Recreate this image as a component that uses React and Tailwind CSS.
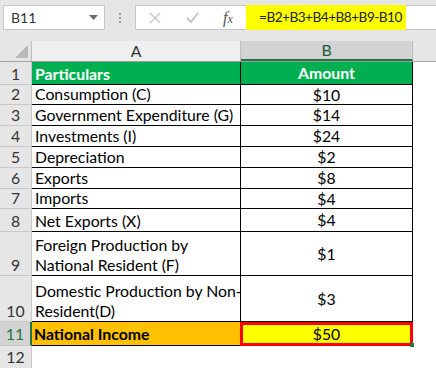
import React from 'react';

const rows = [
  { n: 1, h: 'h-[23px]', a: 'Particulars', b: 'Amount', head: true },
  { n: 2, h: 'h-[20px]', a: 'Consumption (C)', b: '$10' },
  { n: 3, h: 'h-[21px]', a: 'Government Expenditure (G)', b: '$14' },
  { n: 4, h: 'h-[21px]', a: 'Investments (I)', b: '$24' },
  { n: 5, h: 'h-[21px]', a: 'Depreciation', b: '$2' },
  { n: 6, h: 'h-[21px]', a: 'Exports', b: '$8' },
  { n: 7, h: 'h-[20px]', a: 'Imports', b: '$4' },
  { n: 8, h: 'h-[23px]', a: 'Net Exports (X)', b: '$4' },
  { n: 9, h: 'h-[44px]', a: ['Foreign Production by', 'National Resident (F)'], b: '$1' },
  { n: 10, h: 'h-[46px]', a: ['Domestic Production by Non-', 'Resident(D)'], b: '$3' },
];

const App = () => {
  return (
    <div className="w-[436px] h-[368px] overflow-hidden bg-white text-[15.8px] font-['Lato','Liberation_Sans',sans-serif] text-black">
      {/* formula bar */}
      <div className="h-[41px] bg-[#e6e6e6] flex items-start pt-[5px]">
        <div className="ml-[3px] w-[102px] h-[25px] bg-white border border-[#c6c6c6] flex items-center justify-between pl-[7px] pr-[6px]">
          <span className="text-[#333] text-[14px]">B11</span>
          <svg width="9" height="5" viewBox="0 0 9 5"><path d="M0 0h9L4.5 5z" fill="#6b6b6b" /></svg>
        </div>
        <div className="w-[30px] h-[25px] flex flex-col items-center justify-center gap-[2px]">
          <span className="w-[2px] h-[2px] bg-[#9a9a9a]" />
          <span className="w-[2px] h-[2px] bg-[#9a9a9a]" />
          <span className="w-[2px] h-[2px] bg-[#9a9a9a]" />
        </div>
        <div className="flex-1 h-[25px] bg-white border border-r-0 border-[#c6c6c6] flex items-center">
          <div className="w-[110px] shrink-0 flex items-center">
            <svg className="ml-[13px]" width="12" height="12" viewBox="0 0 12 12"><path d="M1 1l10 10M11 1L1 11" stroke="#c3c3c3" strokeWidth="1.3" /></svg>
            <svg className="ml-[25px]" width="13" height="11" viewBox="0 0 13 11"><path d="M1 6l4 4 7-9" stroke="#c3c3c3" strokeWidth="1.8" fill="none" /></svg>
            <span className="ml-[24px] italic text-[#555] text-[16px] font-['Liberation_Serif',serif] leading-none">f<span className="text-[12px]">x</span></span>
          </div>
          <div className="w-[160px] shrink-0 h-[25px] bg-[#ffff00] flex items-center pl-[13px] text-[13.6px] tracking-[-0.5px] text-[#222] whitespace-nowrap">=B2+B3+B4+B8+B9-B10</div>
        </div>
      </div>

      {/* column headers */}
      <div className="h-[21px] flex bg-[#e6e6e6] border-b border-[#9e9e9e]">
        <div className="w-[32px] border-r border-[#bcbcbc] relative">
          <svg className="absolute right-[3px] bottom-[3px]" width="13" height="13" viewBox="0 0 13 13"><path d="M13 0v13H0z" fill="#b9b9b9" /></svg>
        </div>
        <div className="w-[209px] flex items-center justify-center bg-[#efefef] border-r border-[#bcbcbc] text-[#333]">A</div>
        <div className="w-[172px] flex items-center justify-center bg-[#d3d3d3] border-r border-[#bcbcbc] border-b-2 border-b-[#217346] text-[#1e5b3a]">B</div>
        <div className="flex-1" />
      </div>

      {/* data rows */}
      {rows.map((r) => (
        <div key={r.n} className={`${r.h} flex`}>
          <div className="w-[32px] shrink-0 bg-[#e6e6e6] border-r border-b border-[#c8c8c8] flex items-end justify-center text-[#333] leading-[20px]">{r.n}</div>
          <div className={`w-[209px] shrink-0 border-b border-r border-black flex flex-col justify-end pl-[3px] leading-[20px] ${r.head ? 'bg-[#00b050] text-white font-bold justify-center' : ''}`}>
            {Array.isArray(r.a) ? r.a.map((t) => <span key={t} className="whitespace-nowrap">{t}</span>) : <span className="whitespace-nowrap">{r.a}</span>}
          </div>
          <div className={`w-[172px] shrink-0 border-b border-r border-black flex items-center justify-center leading-[20px] ${r.head ? 'bg-[#00b050] text-white font-bold' : ''}`}>{r.b}</div>
        </div>
      ))}

      {/* total row */}
      <div className="h-[24px] flex">
        <div className="w-[32px] shrink-0 bg-[#d3d3d3] border-r-2 border-[#217346] border-b border-b-[#c8c8c8] flex items-center justify-center text-[#217346]">11</div>
        <div className="w-[208px] shrink-0 bg-[#ffc000] border-b border-black flex items-center pl-[2px] font-bold">National Income</div>
        <div className="w-[173px] shrink-0 relative bg-[#ffff00] border-[3px] border-[#ff0000] flex items-center justify-center">
          $50
          <span className="absolute right-[-4px] bottom-[-4px] w-[4px] h-[4px] bg-[#217346]" />
        </div>
      </div>
      <div className="h-[22px] flex">
        <div className="w-[32px] bg-[#e6e6e6] border-r border-[#c8c8c8] flex items-center justify-center text-[#333]">12</div>
      </div>
    </div>
  );
};

export default App;
